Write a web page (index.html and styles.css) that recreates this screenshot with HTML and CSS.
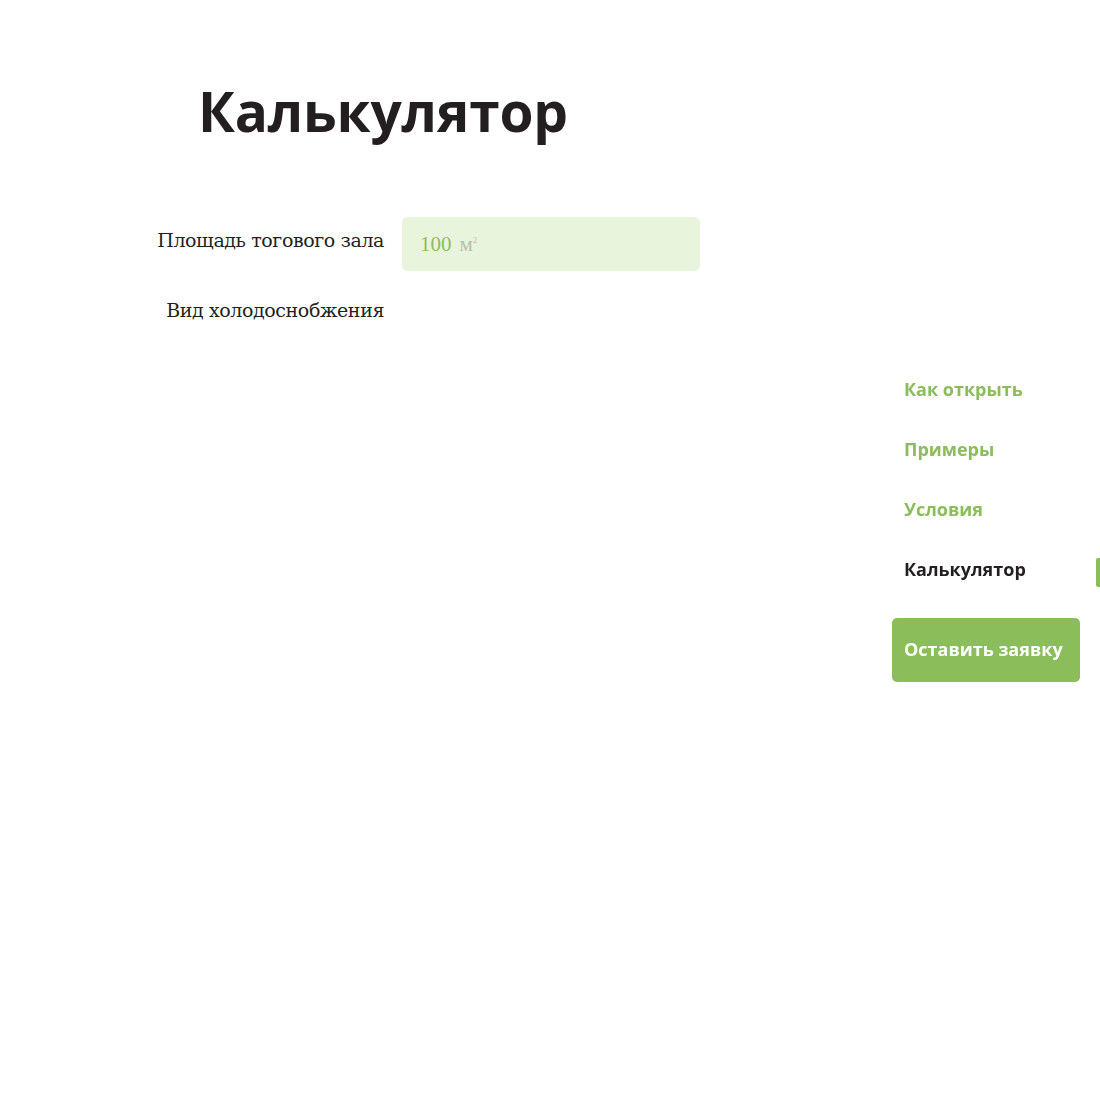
FILE: index.html
```html
<!DOCTYPE html>
<html lang="ru">
<head>
    <meta charset="UTF-8">
    <meta name="viewport" content="width=device-width, initial-scale=1.0">
    <title>Калькулятор</title>
    <link rel="stylesheet" href="styles.css">
</head>
<body>

    <!-- Калькулятор -->
    <main class="calc">
        <h1 class="calc-title">Калькулятор</h1>

        <div class="calc-form">
            <div class="calc-row">
                <label class="calc-label" for="area">Площадь тогового зала</label>
                <div class="calc-input">
                    <span class="calc-value" id="area">100</span>
                    <span class="calc-unit">м<sup>2</sup></span>
                </div>
            </div>
            <div class="calc-row">
                <span class="calc-label">Вид холодоснобжения</span>
            </div>
        </div>
    </main>

    <!-- Боковое меню -->
    <nav class="side-nav">
        <a href="#" class="side-link">Как открыть</a>
        <a href="#" class="side-link">Примеры</a>
        <a href="#" class="side-link">Условия</a>
        <a href="#" class="side-link active">Калькулятор</a>
        <a href="#" class="side-button">Оставить заявку</a>
    </nav>

</body>
</html>
```

FILE: styles.css
```css
/* Основные стили */
body, html {
    margin: 0;
    padding: 0;
    background: #fff;
    color: #231f20;
}

.calc {
    padding: 78px 0 0 0;
}

.calc-title {
    font-family: 'Open Sans', sans-serif;
    font-weight: 700;
    font-size: 55px;
    line-height: 66px;
    letter-spacing: -0.2px;
    margin: 0 0 0 198px;
    color: #231f20;
}

.calc-form {
    margin-top: 73px;
    display: flex;
    flex-direction: column;
    gap: 16px;
}

.calc-row {
    display: flex;
    align-items: center;
    gap: 18px;
    min-height: 54px;
}

.calc-label {
    width: 384px;
    text-align: right;
    font-family: 'DejaVu Serif', serif;
    font-size: 19px;
    letter-spacing: -0.4px;
    color: #231f20;
    position: relative;
    top: -4px;
}

.calc-input {
    width: 298px;
    height: 54px;
    box-sizing: border-box;
    padding: 0 18px;
    display: flex;
    align-items: center;
    gap: 8px;
    background: #e8f5dc;
    border-radius: 6px;
    font-family: 'Liberation Serif', serif;
    font-size: 21px;
}

.calc-value {
    color: #8bbd5a;
}

.calc-unit {
    color: #b5bfae;
}

.calc-unit sup {
    font-size: 9px;
}

/* Боковое меню */
.side-nav {
    position: fixed;
    top: 371px;
    left: 892px;
    width: 188px;
    display: flex;
    flex-direction: column;
}

.side-link {
    position: relative;
    display: block;
    height: 60px;
    line-height: 36px;
    padding-left: 12px;
    font-family: 'Open Sans', sans-serif;
    font-weight: 700;
    font-size: 18px;
    color: #8bbd5a;
    text-decoration: none;
}

.side-link.active {
    color: #231f20;
}

.side-link.active::after {
    content: '';
    position: absolute;
    top: 7px;
    right: -20px;
    width: 4px;
    height: 29px;
    background: #8bbd5a;
    border-radius: 2px 0 0 2px;
}

.side-button {
    display: block;
    margin-top: 7px;
    height: 64px;
    line-height: 63px;
    padding-left: 12px;
    border-radius: 5px;
    background: #8bbd5a;
    color: #fff;
    font-family: 'Open Sans', sans-serif;
    font-weight: 700;
    font-size: 18px;
    text-decoration: none;
}
```
